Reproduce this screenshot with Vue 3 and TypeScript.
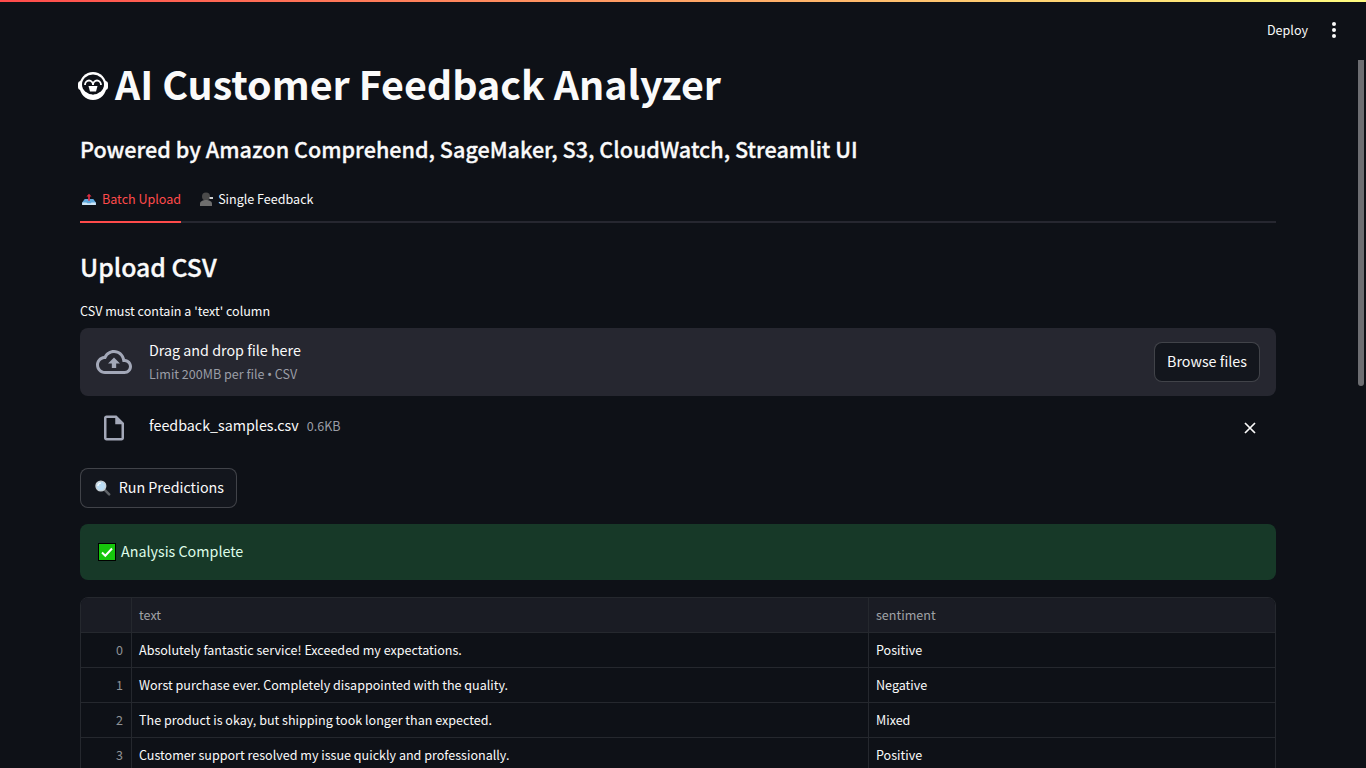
<script setup lang="ts">
interface Row { id: number; text: string; sentiment: string }
const rows: Row[] = [
  { id: 0, text: 'Absolutely fantastic service! Exceeded my expectations.', sentiment: 'Positive' },
  { id: 1, text: 'Worst purchase ever. Completely disappointed with the quality.', sentiment: 'Negative' },
  { id: 2, text: 'The product is okay, but shipping took longer than expected.', sentiment: 'Mixed' },
  { id: 3, text: 'Customer support resolved my issue quickly and professionally.', sentiment: 'Positive' }
]
</script>

<template>
  <div class="app">
    <div class="topline"></div>
    <header class="header">
      <span class="deploy">Deploy</span>
      <svg class="dots" width="24" height="24" viewBox="0 0 24 24" fill="#fafafa"><circle cx="12" cy="6" r="2"/><circle cx="12" cy="12" r="2"/><circle cx="12" cy="18" r="2"/></svg>
    </header>
    <main class="main">
      <h1 class="title">
        <svg class="robot" width="30" height="28" viewBox="0 0 30 28">
          <ellipse cx="15" cy="14" rx="13.500" ry="14" fill="#fff"/>
          <rect x="0" y="9" width="30" height="9" rx="3" fill="#fff"/>
          <ellipse cx="15" cy="12.500" rx="11" ry="10" fill="#0e1117"/>
          <path d="M7 13a4 4.500 0 0 1 8 0M15 13a4 4.500 0 0 1 8 0" fill="none" stroke="#fff" stroke-width="1.800"/>
          <path d="M10.500 14h9l-1.500 5.500h-6z" fill="#fff"/>
          <circle cx="15" cy="21.500" r="1" fill="#0e1117"/>
        </svg>
        <span>AI Customer Feedback Analyzer</span>
      </h1>
      <h3 class="sub">Powered by Amazon Comprehend, SageMaker, S3, CloudWatch, Streamlit UI</h3>
      <nav class="tabs">
        <div class="tab active">
          <svg width="14" height="12" viewBox="0 0 16 14">
            <path d="M3 7h10l3 4v3H0v-3z" fill="#5ea8dc"/>
            <path d="M0 11h5l1 1h4l1-1h5v3H0z" fill="#cfe6f7"/>
            <path d="M7 9V4H5l3-3 3 3H9v5z" fill="#dd2e44"/>
          </svg>
          <span>Batch Upload</span>
        </div>
        <div class="tab">
          <svg width="13" height="14" viewBox="0 0 13 14">
            <circle cx="6" cy="4.500" r="4" fill="#4a4a4a"/>
            <path d="M0 14v-2c0-3 3-4 6-4s6 1 6 4v2z" fill="#6e6e6e"/>
            <rect x="9.500" y="5" width="3.500" height="2" fill="#d0d0d0"/>
          </svg>
          <span>Single Feedback</span>
        </div>
      </nav>
      <h2 class="section">Upload CSV</h2>
      <p class="label">CSV must contain a 'text' column</p>
      <section class="drop">
        <svg class="cloud" width="36" height="36" viewBox="0 0 24 24" fill="#a3a8b8"><path d="M19.35 10.04C18.67 6.59 15.64 4 12 4 9.11 4 6.6 5.64 5.35 8.04 2.34 8.36 0 10.91 0 14c0 3.31 2.69 6 6 6h13c2.76 0 5-2.24 5-5 0-2.64-2.05-4.78-4.65-4.96zM19 18H6c-2.21 0-4-1.79-4-4 0-2.05 1.53-3.76 3.56-3.97l1.07-.11.5-.95C8.08 7.14 9.94 6 12 6c2.62 0 4.88 1.86 5.39 4.43l.3 1.5 1.53.11c1.56.1 2.78 1.41 2.78 2.96 0 1.65-1.35 3-3 3zM8 13h2.55v3h2.9v-3H16l-4-4z"/></svg>
        <div class="drop-text">
          <span class="drop-main">Drag and drop file here</span>
          <span class="drop-sub">Limit 200MB per file <span class="bullet">•</span> CSV</span>
        </div>
        <button class="btn browse"><span class="lift">Browse files</span></button>
      </section>
      <section class="file">
        <svg class="file-icon" width="30" height="30" viewBox="0 0 24 24" fill="#a3a8b8"><path d="M14 2H6c-1.1 0-1.99.9-1.99 2L4 20c0 1.1.89 2 1.99 2H18c1.1 0 2-.9 2-2V8l-6-6zM6 20V4h7v5h5v11H6z"/></svg>
        <span class="file-name">feedback_samples.csv</span>
        <span class="file-size">0.6KB</span>
        <svg class="close" width="16" height="16" viewBox="0 0 16 16" stroke="#fafafa" stroke-width="1.7"><path d="M3 3l10 10M13 3L3 13"/></svg>
      </section>
      <button class="btn run">
        <svg width="16" height="16" viewBox="0 0 16 16">
          <path d="M9.500 9.500l5 5" stroke="#5f6368" stroke-width="2.600" stroke-linecap="round"/>
          <circle cx="6" cy="6" r="5" fill="#bbddf5" stroke="#c9d2d8" stroke-width="1.400"/>
          <path d="M3 6a3 3 0 0 1 3-3" stroke="#fff" stroke-width="1.200" fill="none"/>
        </svg>
        <span class="lift">Run Predictions</span>
      </button>
      <div class="alert">
        <svg width="18" height="18" viewBox="0 0 18 18">
          <rect x="0.500" y="0.500" width="17" height="17" fill="#16c60c" stroke="#000"/>
          <path d="M4 9.500l3.300 3.200L14 5.500" fill="none" stroke="#fff" stroke-width="2"/>
        </svg>
        <span class="lift">Analysis Complete</span>
      </div>
      <div class="table">
        <div class="row head">
          <div class="c idx"></div>
          <div class="c txt">text</div>
          <div class="c sent">sentiment</div>
        </div>
        <div v-for="r in rows" :key="r.id" class="row">
          <div class="c idx">{{ r.id }}</div>
          <div class="c txt">{{ r.text }}</div>
          <div class="c sent">{{ r.sentiment }}</div>
        </div>
      </div>
    </main>
    <div class="scrollbar"></div>
  </div>
</template>

<style>
html, body { margin: 0; height: 100%; overflow: hidden; background: #0e1117; }
</style>

<style scoped>
.app {
  position: relative;
  height: 768px;
  overflow: hidden;
  background: #0e1117;
  color: #fafafa;
  font-family: "Noto Sans CJK SC", "Noto Sans", sans-serif;
  font-size: 14.3px;
}
.topline { height: 2px; background: linear-gradient(90deg, #ff4b4b, #fffd80); }
.header {
  height: 58px;
  display: flex;
  align-items: center;
  justify-content: flex-end;
  gap: 14px;
  padding: 0 20px 2px 0;
  box-sizing: border-box;
}
.deploy { font-size: 12.55px; line-height: 20px; }
.dots { display: block; }
.main { width: 1196px; margin-left: 80px; }
.title {
  display: flex;
  align-items: center;
  gap: 7px;
  height: 52px;
  margin: 0 0 0 -2px;
  font-size: 39.4px;
  font-weight: 700;
  white-space: nowrap;
}
.title span { line-height: 48px; margin-bottom: 6px; }
.robot { flex: none; }
.sub {
  margin: 19px 0 0;
  font-size: 21.58px;
  line-height: 36px;
  font-weight: 500;
  -webkit-text-stroke: 0.3px #fafafa;
  white-space: nowrap;
}
.tabs {
  display: flex;
  gap: 19px;
  height: 41px;
  margin-top: 13px;
  border-bottom: 2px solid #262730;
  font-size: 12.55px;
}
.tab {
  display: flex;
  align-items: center;
  gap: 5px;
  box-sizing: border-box;
  margin-bottom: -2px;
  height: 43px;
  padding-bottom: 4px;
  border-bottom: 2px solid transparent;
}
.tab.active { color: #ff4b4b; border-bottom-color: #ff4b4b; padding-left: 2px; gap: 6px; }
.section {
  margin: 23px 0 0;
  font-size: 24.8px;
  line-height: 40px;
  font-weight: 500;
  -webkit-text-stroke: 0.3px #fafafa;
}
.label { margin: 15px 0 0; font-size: 12.55px; line-height: 20px; }
.drop {
  display: flex;
  align-items: center;
  height: 68px;
  margin-top: 7px;
  padding: 0 16px;
  box-sizing: border-box;
  background: #262730;
  border-radius: 8px;
}
.cloud { flex: none; }
.drop-text { display: flex; flex-direction: column; margin: 0 0 2px 17px; flex: 1; }
.drop-main { font-size: 14.3px; line-height: 24px; }
.drop-sub { font-size: 12.55px; line-height: 20px; margin-top: 2px; color: #9a9da6; }
.bullet { font-family: "Noto Sans", sans-serif; }
.lift { margin-bottom: 2px; }
.btn {
  display: inline-flex;
  align-items: center;
  justify-content: center;
  height: 40px;
  box-sizing: border-box;
  padding: 0 12px;
  background: #13161d;
  border: 1px solid rgba(250, 250, 250, 0.2);
  border-radius: 8px;
  color: #fafafa;
  font: inherit;
  font-size: 14.3px;
  line-height: 24px;
  white-space: nowrap;
}
.browse { width: 106px; padding: 0; }
.file {
  display: flex;
  align-items: center;
  height: 48px;
  margin-top: 8px;
  padding-left: 19px;
}
.file-icon { flex: none; }
.file-name { margin: 0 0 6px 20px; font-size: 14.3px; line-height: 24px; }
.file-size { margin: 0 0 4px 8px; font-size: 12.55px; line-height: 20px; color: #9a9da6; }
.close { margin-left: auto; margin-right: 18px; flex: none; }
.run { display: flex; gap: 8px; width: 157px; margin-top: 16px; justify-content: flex-start; padding-left: 14px; }
.alert {
  display: flex;
  align-items: center;
  gap: 5px;
  height: 56px;
  margin-top: 16px;
  padding: 0 18px;
  box-sizing: border-box;
  border-radius: 8px;
  background: #173928;
  color: #dffde9;
  line-height: 24px;
}
.table {
  margin-top: 17px;
  border: 1px solid #25282e;
  border-radius: 8px 8px 0 0;
  overflow: hidden;
  box-sizing: border-box;
  font-size: 12.55px;
}
.row {
  display: grid;
  grid-template-columns: 51px 737px 1fr;
  height: 35px;
  border-bottom: 1px solid #25282e;
  box-sizing: border-box;
}
.row.head { background: #1a1c24; color: #a0a2a6; }
.c {
  display: flex;
  align-items: center;
  padding: 0 7px;
  line-height: 18px;
  white-space: nowrap;
  border-right: 1px solid #25282e;
  box-sizing: border-box;
}
.c.sent { border-right: none; }
.idx { justify-content: flex-end; color: #8f9296; background: #1a1c24; padding-right: 8px; }
.row:not(.head) .idx { background: #0e1117; }
.scrollbar {
  position: absolute;
  top: 60px;
  left: 1358px;
  width: 6px;
  height: 326px;
  border-radius: 0 0 3px 3px;
  background: #6d6e72;
}
</style>
